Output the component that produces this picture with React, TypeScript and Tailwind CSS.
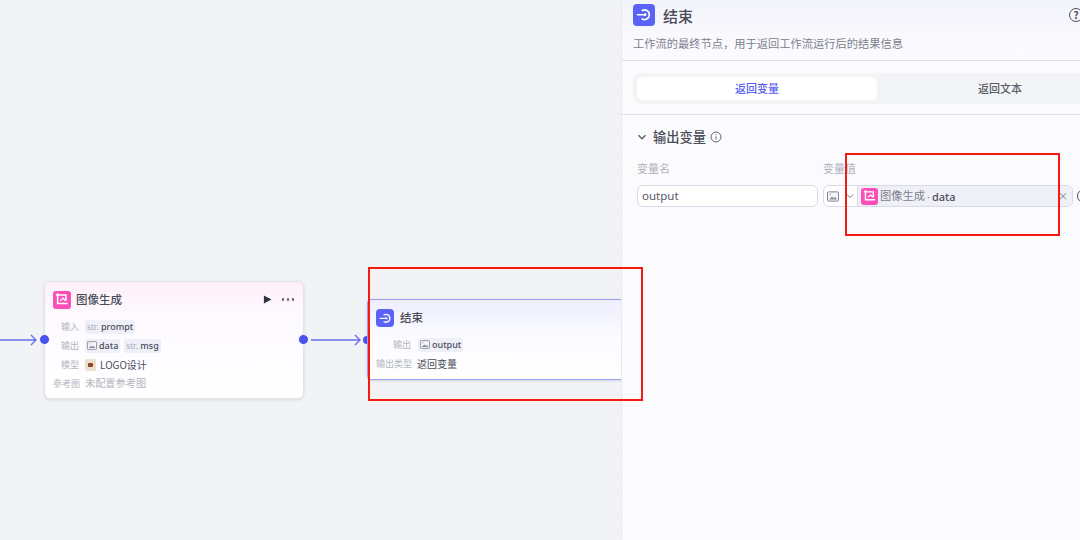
import React from "react";

const FONT = "font-['Noto_Sans_CJK_SC','Noto_Sans',sans-serif]";

function ImageGenIcon({ size }: { size: string }) {
  return (
    <div className={`${size} rounded-[3px] bg-[#fb4fb8] flex items-center justify-center shrink-0`}>
      <svg viewBox="0 0 16 16" className="w-[78%] h-[78%]" fill="none" stroke="#fff" strokeWidth="1.7">
        <path d="M3 1.5V13H14.5" />
        <path d="M1 3.5H12.5V10" />
        <path d="M6 10l3-3 3 3" strokeWidth="1.4" />
      </svg>
    </div>
  );
}

function EndIcon({ size }: { size: string }) {
  return (
    <div className={`${size} rounded-[4px] bg-[#5a62f8] flex items-center justify-center shrink-0`}>
      <svg viewBox="0 0 16 16" className="w-[70%] h-[70%]" fill="none" stroke="#fff" strokeWidth="1.7" strokeLinecap="round">
        <path d="M1.5 8H9" />
        <path d="M6.5 3.6A5 5 0 1 1 6.5 12.4" />
        <circle cx="9.5" cy="8" r="1.4" fill="#fff" stroke="none" />
      </svg>
    </div>
  );
}

function PicIcon({ className }: { className: string }) {
  return (
    <svg viewBox="0 0 14 12" className={className} fill="none">
      <rect x="0.6" y="0.6" width="12.8" height="10.8" rx="1.2" stroke="#6f7484" strokeWidth="1" fill="#f4f5f9" />
      <path d="M2.5 9.5L6 6l2 2 1.6-1.6 2 3.1z" fill="#8a8fa0" />
      <circle cx="4" cy="3.6" r="0.9" fill="#a5a9b8" />
    </svg>
  );
}

function Chip({ kind, text }: { kind: "str" | "pic"; text: string }) {
  return (
    <span className="h-[14px] px-[2px] rounded-[3px] bg-[#eff0f7] flex items-center gap-[2px] text-[9px] leading-none font-medium text-[#4a4d5c]">
      {kind === "str" ? (
        <span className="text-[#a9adbb] text-[10px] font-['Liberation_Serif',serif]">str.</span>
      ) : (
        <PicIcon className="w-[10px] h-[9px]" />
      )}
      <span className="font-['Noto_Sans',sans-serif]">{text}</span>
    </span>
  );
}

function Row({ label, w, children }: { label: string; w: string; children: React.ReactNode }) {
  return (
    <div className="flex items-center h-[19px]">
      <span className={`${w} text-right text-[9px] text-[#b3b6c0] shrink-0 leading-none whitespace-nowrap`}>{label}</span>
      <div className="flex items-center gap-[4px] ml-[6px]">{children}</div>
    </div>
  );
}

function Handle({ className }: { className: string }) {
  return <div className={`absolute w-[11px] h-[11px] rounded-full bg-[#4b53ee] border border-white ${className}`} />;
}

export default function App() {
  return (
    <div className={`${FONT} w-[1080px] h-[540px] overflow-hidden flex relative bg-[#f2f3f5]`}>
      <div className="relative w-[621px] h-full overflow-hidden bg-[#f2f3f5] bg-[radial-gradient(#ebecee_1px,transparent_1px)] bg-[length:20px_20px] bg-[position:8px_4px]">
        {/* edges */}
        <svg className="absolute left-0 top-[330px] w-[40px] h-[20px]" viewBox="0 0 40 20" fill="none" stroke="#6a70ee" strokeWidth="1.4">
          <path d="M0 10H36M31 5l5 5-5 5" />
        </svg>
        <svg className="absolute left-[308px] top-[330px] w-[56px] h-[20px]" viewBox="0 0 56 20" fill="none" stroke="#6a70ee" strokeWidth="1.4">
          <path d="M3 10H52M47 5l5 5-5 5" />
        </svg>

        {/* image generation node */}
        <div className="absolute left-[44px] top-[281px] w-[260px] h-[118px] rounded-[6px] bg-white border border-[#e3e4ea] shadow-[0_1px_3px_rgba(30,30,60,0.12)] bg-gradient-to-b from-[#fff0f8] via-[#fdfaff] via-[30%] to-white">
          <div className="flex items-center h-[35px] pl-[8px] pr-[9px]">
            <ImageGenIcon size="w-[18px] h-[18px]" />
            <span className="ml-[5px] text-[11.5px] font-medium text-[#4a4c58] leading-none">图像生成</span>
            <svg viewBox="0 0 10 10" className="ml-auto w-[9px] h-[9px]" fill="#2f3342"><path d="M1 0.5L9.5 5 1 9.5z" /></svg>
            <div className="ml-[10px] flex gap-[2.5px]">
              <span className="w-[2.5px] h-[2.5px] rounded-full bg-[#5d606d]" />
              <span className="w-[2.5px] h-[2.5px] rounded-full bg-[#5d606d]" />
              <span className="w-[2.5px] h-[2.5px] rounded-full bg-[#5d606d]" />
            </div>
          </div>
          <div className="pl-[8px]">
            <Row label="输入" w="w-[26px]"><Chip kind="str" text="prompt" /></Row>
            <Row label="输出" w="w-[26px]"><Chip kind="pic" text="data" /><Chip kind="str" text="msg" /></Row>
            <Row label="模型" w="w-[26px]">
              <span className="w-[11px] h-[12px] rounded-[2px] bg-[#ebe0cf] flex items-center justify-center">
                <span className="w-[5px] h-[4px] rounded-[1px] bg-[#8c4a24]" />
              </span>
              <span className="text-[10px] text-[#4a4d5c] leading-none">LOGO设计</span>
            </Row>
            <Row label="参考图" w="w-[26px]"><span className="text-[10.2px] text-[#b3b6c0] leading-none">未配置参考图</span></Row>
          </div>
        </div>
        <Handle className="left-[39px] top-[334px]" />
        <Handle className="left-[298px] top-[334px]" />

        {/* end node */}
        <div className="absolute left-[363px] top-[336px] w-[8px] h-[8px] rounded-full bg-[#4b53ee]" />
        <div className="absolute left-[367px] top-[299px] w-[262px] h-[81px] rounded-[4px] border border-[#9a9ef2] bg-gradient-to-b from-[#eeeeff] via-[#fbfbff] via-[45%] to-white shadow-[0_1px_3px_rgba(60,60,140,0.15)]">
          <div className="flex items-center h-[35px] pl-[8px] pt-[1px]">
            <EndIcon size="w-[18px] h-[18px]" />
            <span className="ml-[6px] text-[11.5px] font-medium text-[#4a4c58] leading-none">结束</span>
          </div>
          <div className="pl-[8px]">
            <Row label="输出" w="w-[35px]"><span className="ml-[1px]"><Chip kind="pic" text="output" /></span></Row>
            <Row label="输出类型" w="w-[35px]"><span className="text-[10px] pt-[1px] text-[#4a4d5c] leading-none">返回变量</span></Row>
          </div>
        </div>
      </div>

      {/* right panel */}
      <div className="relative z-10 w-[459px] h-full bg-[#fbfbfe] border-l border-[#e8e9ef] flex flex-col">
        <div className="h-[61px] border-b border-[#dcdfea] pl-[11px] pt-[4px] shrink-0 bg-gradient-to-b from-[#f3f3fb] to-[#fcfcff]">
          <div className="flex items-center h-[22px] w-[480px]">
            <EndIcon size="w-[22px] h-[22px]" />
            <span className="ml-[8px] text-[15px] font-medium text-[#4a4c58] leading-none">结束</span>
            <span className="ml-[376px] w-[14px] h-[14px] rounded-full border-[1.5px] border-[#4b4e5c] text-[#4b4e5c] text-[10px] font-bold flex items-center justify-center leading-none shrink-0">?</span>
          </div>
          <p className="mt-[10px] text-[11.25px] text-[#7d808c] leading-[14px]">工作流的最终节点，用于返回工作流运行后的结果信息</p>
        </div>

        <div className="h-[54px] border-b border-[#dcdfea] pl-[11px] pt-[12px] shrink-0">
          <div className="w-[490px] h-[31px] rounded-[8px] bg-[#f3f4f6] flex items-center pl-[4px]">
            <div className="w-[240px] shrink-0 h-[23px] rounded-[6px] bg-white flex items-center justify-center text-[11px] font-medium text-[#5a5ff0] leading-none">返回变量</div>
            <div className="w-[246px] shrink-0 h-[23px] flex items-center justify-center text-[11px] font-medium text-[#5a5d68] whitespace-nowrap leading-none">返回文本</div>
          </div>
        </div>

        <div className="pl-[15px]">
          <div className="flex items-center h-[20px] mt-[12px]">
            <svg viewBox="0 0 10 10" className="w-[10px] h-[10px]" fill="none" stroke="#5a5d68" strokeWidth="1.3"><path d="M1.5 3.2L5 6.8l3.5-3.6" /></svg>
            <span className="ml-[6px] text-[13.25px] font-medium text-[#4a4c58] leading-none">输出变量</span>
            <svg viewBox="0 0 14 14" className="ml-[4px] w-[12px] h-[12px]" fill="none" stroke="#5a5d68" strokeWidth="1.1">
              <circle cx="7" cy="7" r="5.8" />
              <path d="M7 6.2v3.8M7 3.8v1.1" />
            </svg>
          </div>
          <div className="flex mt-[14px] h-[14px] items-center text-[11px] text-[#b0b3bd] leading-none">
            <span className="w-[186px]">变量名</span>
            <span>变量值</span>
          </div>
          <div className="flex items-center mt-[10px] w-[500px]">
            <div className="w-[181px] h-[22px] rounded-[6px] border border-[#d8dae5] bg-white flex items-center pl-[4px] text-[11.5px] text-[#555866] font-['Noto_Sans',sans-serif] leading-none">output</div>
            <div className="ml-[5px] h-[22px] flex items-center rounded-[6px] border border-[#d8dae5] bg-white w-[250px] overflow-hidden shrink-0">
              <div className="w-[34px] flex items-center pl-[3px] gap-[7px] h-full border-r border-[#d8dae5] shrink-0">
                <PicIcon className="w-[12px] h-[11px]" />
                <svg viewBox="0 0 8 8" className="w-[8px] h-[8px]" fill="none" stroke="#6f7280" strokeWidth="1"><path d="M1 2.5L4 5.5 7 2.5" /></svg>
              </div>
              <div className="flex-1 flex items-center h-full bg-[#eff0f7]">
                <ImageGenIcon size="w-[17px] h-[17px] ml-[3px]" />
                <span className="ml-[2px] text-[11.25px] text-[#7d808c] leading-none">图像生成</span>
                <span className="mx-[2px] text-[11px] text-[#7d808c] leading-none font-['Noto_Sans',sans-serif]">·</span>
                <span className="text-[11px] font-medium text-[#4d5060] font-['Noto_Sans',sans-serif] leading-none">data</span>
                <span className="ml-auto mr-[4px] text-[10px] text-[#7d808c] leading-none">×</span>
              </div>
            </div>
            <span className="ml-[4px] w-[14px] h-[14px] rounded-full border-[1.5px] border-[#4b4e5c] shrink-0" />
          </div>
        </div>
      </div>

      {/* red annotation boxes */}
      <div className="absolute z-20 left-[368px] top-[267px] w-[275px] h-[134px] border-2 border-[#f5190f]" />
      <div className="absolute z-20 left-[845px] top-[153px] w-[215px] h-[83px] border-2 border-[#f5190f]" />
    </div>
  );
}
